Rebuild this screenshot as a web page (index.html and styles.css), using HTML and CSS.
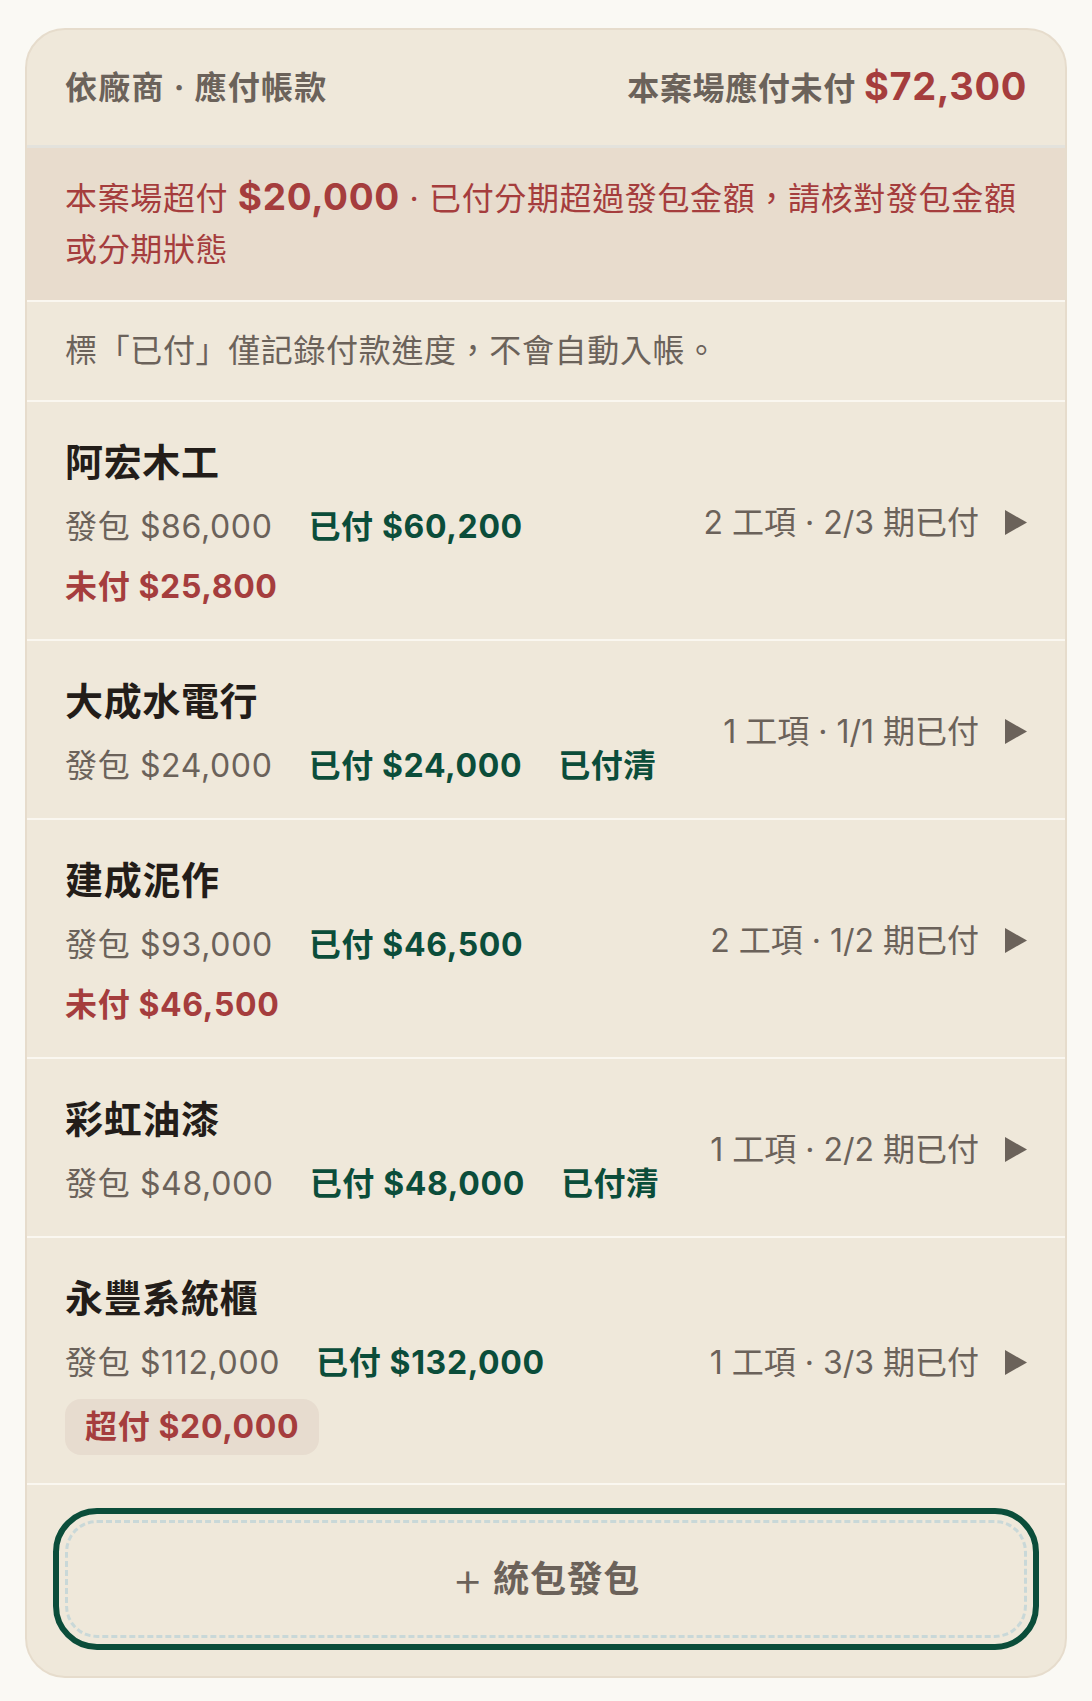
FILE: index.html
```html
<!DOCTYPE html>
<html lang="zh-Hant">
<head>
  <meta charset="UTF-8">
  <meta name="viewport" content="width=device-width, initial-scale=1.0">
  <title>依廠商 · 應付帳款</title>
  <link rel="stylesheet" href="styles.css">
</head>
<body>
  <div class="card">
    <div class="card-head">
      <span class="head-title">依廠商 · 應付帳款</span>
      <span class="head-total">本案場應付未付 <span class="head-amount">$72,300</span></span>
    </div>

    <div class="alert">本案場超付 <strong class="alert-amount">$20,000</strong> · 已付分期超過發包金額，請核對發包金額或分期狀態</div>

    <div class="note">標「已付」僅記錄付款進度，不會自動入帳。</div>

    <div class="vendor">
      <div class="vendor-main">
        <div class="vendor-name">阿宏木工</div>
        <div class="figures">
          <span class="fig">發包 $86,000</span>
          <span class="fig paid">已付 $60,200</span>
          <span class="fig due">未付 $25,800</span>
        </div>
      </div>
      <div class="vendor-meta">2 工項 · 2/3 期已付<svg class="arrow" viewBox="0 0 22 25"><polygon points="0,0 22,12.5 0,25"/></svg></div>
    </div>

    <div class="vendor">
      <div class="vendor-main">
        <div class="vendor-name">大成水電行</div>
        <div class="figures">
          <span class="fig">發包 $24,000</span>
          <span class="fig paid">已付 $24,000</span>
          <span class="fig paid">已付清</span>
        </div>
      </div>
      <div class="vendor-meta">1 工項 · 1/1 期已付<svg class="arrow" viewBox="0 0 22 25"><polygon points="0,0 22,12.5 0,25"/></svg></div>
    </div>

    <div class="vendor">
      <div class="vendor-main">
        <div class="vendor-name">建成泥作</div>
        <div class="figures">
          <span class="fig">發包 $93,000</span>
          <span class="fig paid">已付 $46,500</span>
          <span class="fig due">未付 $46,500</span>
        </div>
      </div>
      <div class="vendor-meta">2 工項 · 1/2 期已付<svg class="arrow" viewBox="0 0 22 25"><polygon points="0,0 22,12.5 0,25"/></svg></div>
    </div>

    <div class="vendor">
      <div class="vendor-main">
        <div class="vendor-name">彩虹油漆</div>
        <div class="figures">
          <span class="fig">發包 $48,000</span>
          <span class="fig paid">已付 $48,000</span>
          <span class="fig paid">已付清</span>
        </div>
      </div>
      <div class="vendor-meta">1 工項 · 2/2 期已付<svg class="arrow" viewBox="0 0 22 25"><polygon points="0,0 22,12.5 0,25"/></svg></div>
    </div>

    <div class="vendor">
      <div class="vendor-main">
        <div class="vendor-name">永豐系統櫃</div>
        <div class="figures">
          <span class="fig">發包 $112,000</span>
          <span class="fig paid">已付 $132,000</span>
          <span class="fig over">超付 $20,000</span>
        </div>
      </div>
      <div class="vendor-meta">1 工項 · 3/3 期已付<svg class="arrow" viewBox="0 0 22 25"><polygon points="0,0 22,12.5 0,25"/></svg></div>
    </div>

    <div class="card-foot">
      <button class="add-btn"><span class="plus">+</span> 統包發包</button>
    </div>
  </div>
</body>
</html>
```

FILE: styles.css
```css
body {
  margin: 0;
  padding: 28px 25px;
  background-color: #faf9f4;
  font-family: "Inter", "Noto Sans CJK TC", sans-serif;
  font-size: 32px;
  letter-spacing: 0.02em;
  color: #6b625a;
}
.card {
  background-color: #efe8da;
  border: 2px solid #e6dccc;
  border-radius: 40px;
  overflow: hidden;
}
.card-head {
  display: flex;
  justify-content: space-between;
  align-items: center;
  padding: 32px 38px;
  line-height: 48px;
  font-weight: 700;
  border-bottom: 3px solid #e3e2dc;
}
.head-title {
  letter-spacing: 0.04em;
}
.head-amount {
  font-size: 38px;
  color: #a53d3d;
}
.alert {
  background-color: #e8dccd;
  color: #a53d3d;
  padding: 23px 38px 25px;
  line-height: 51px;
  border-bottom: 2px solid #faf7f0;
}
.alert-amount {
  font-size: 37px;
  font-weight: 700;
}
.note {
  padding: 25px 38px;
  line-height: 48px;
  border-bottom: 2px solid #faf7f0;
}
.vendor {
  display: flex;
  align-items: center;
  padding: 32px 38px 28px;
  border-bottom: 2px solid #faf7f0;
}
.vendor-main {
  flex: 1;
  min-width: 0;
  display: flex;
  flex-direction: column;
  gap: 12px;
}
.vendor-name {
  font-size: 38px;
  font-weight: 700;
  line-height: 57px;
  color: #231d19;
}
.figures {
  display: flex;
  flex-wrap: wrap;
  align-items: center;
  column-gap: 36px;
  row-gap: 12px;
  line-height: 48px;
}
.fig {
  white-space: nowrap;
}
.fig.paid {
  font-weight: 700;
  color: #0b4d3a;
}
.fig.due {
  font-weight: 700;
  color: #a53d3d;
}
.fig.over {
  font-weight: 700;
  color: #a53d3d;
  background-color: #e7dccf;
  padding: 4px 20px;
  border-radius: 16px;
}
.vendor-meta {
  flex-shrink: 0;
  display: flex;
  align-items: center;
  margin-left: 24px;
  white-space: nowrap;
  line-height: 48px;
  letter-spacing: 0;
}
.arrow {
  width: 22px;
  height: 25px;
  margin-left: 26px;
  fill: #6b625a;
}
.card-foot {
  padding: 35px 38px 38px;
}
.add-btn {
  display: block;
  width: 100%;
  padding: 29px;
  background-color: transparent;
  border: 3px dashed #c9d8d8;
  border-radius: 32px;
  outline: 6px solid #0b4d3a;
  outline-offset: 6px;
  font-family: inherit;
  font-size: 36px;
  font-weight: 700;
  line-height: 54px;
  letter-spacing: 0.02em;
  color: #6b625a;
  cursor: pointer;
}
.plus {
  font-size: 48px;
  font-weight: 300;
  vertical-align: top;
}
```
